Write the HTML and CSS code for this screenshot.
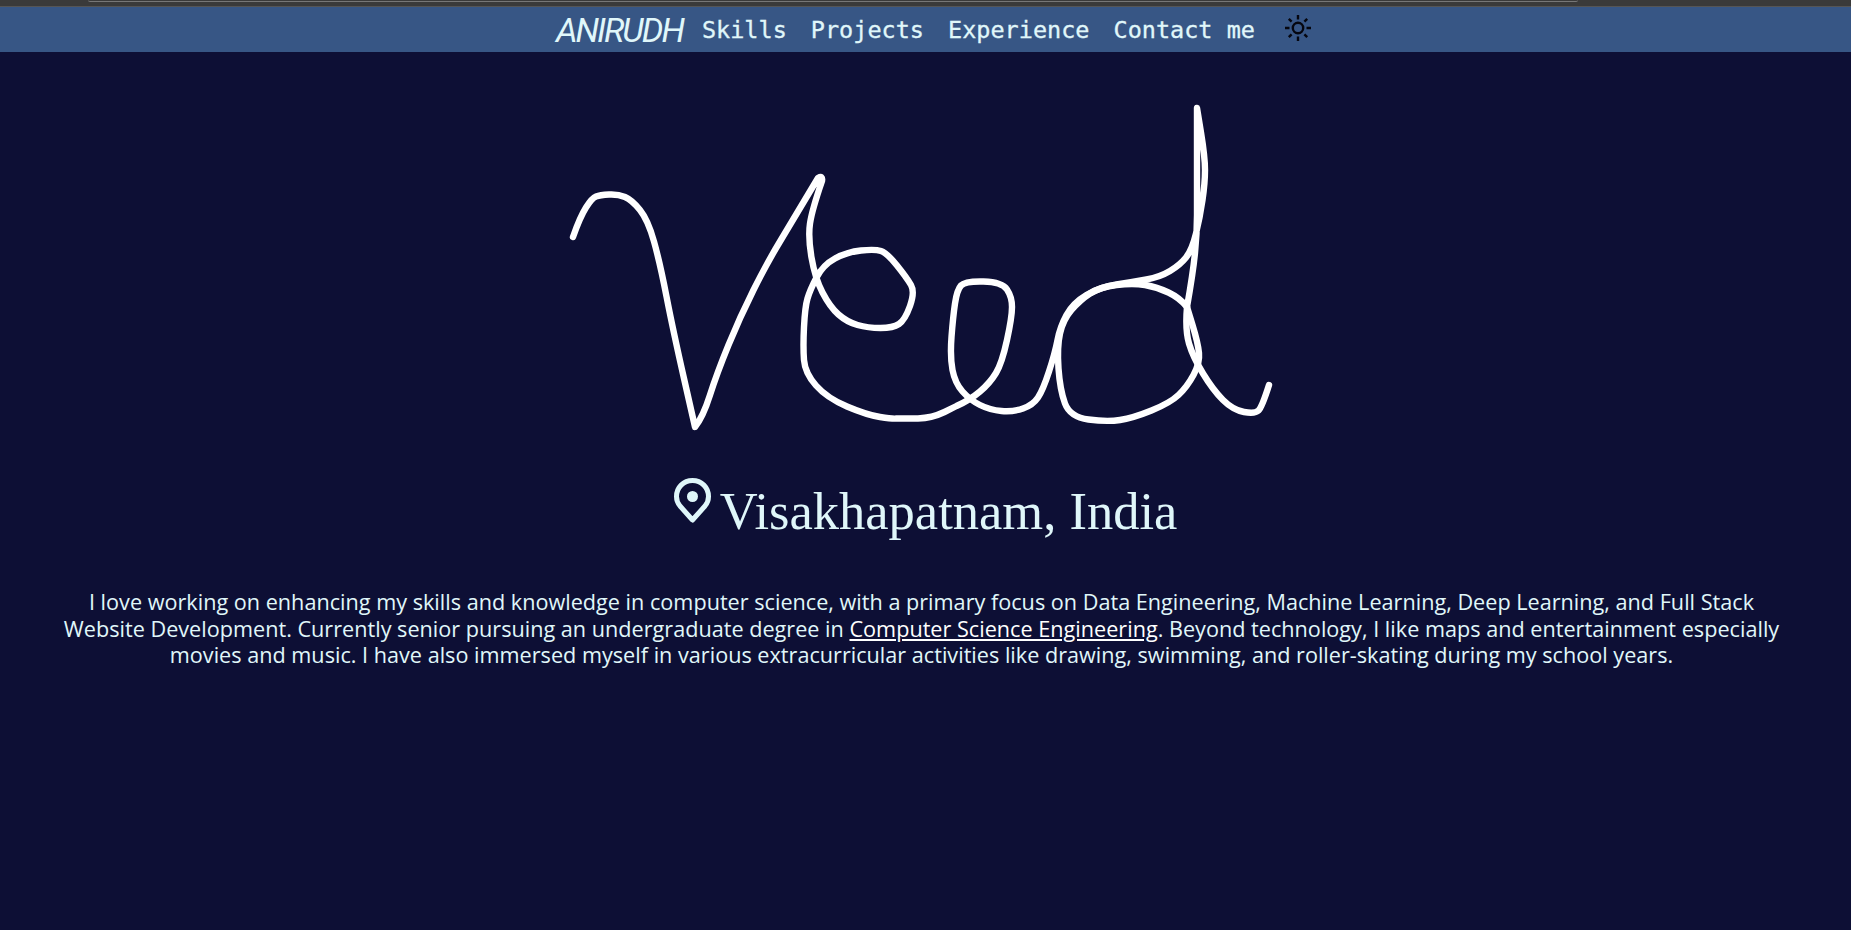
FILE: index.html
```html
<!DOCTYPE html>
<html lang="en">
<head>
    <meta charset="UTF-8">
    <meta name="viewport" content="width=device-width, initial-scale=1.0">
    <title>Anirudh</title>
    <link rel="stylesheet" href="styles.css">
</head>
<body>
    <div class="browser-strip"><div class="address-edge"></div></div>
    <nav class="navbar">
        <a class="brand" href="#">ANIRUDH</a>
        <a class="nav-link" href="#skills">Skills</a>
        <a class="nav-link" href="#projects">Projects</a>
        <a class="nav-link" href="#experience">Experience</a>
        <a class="nav-link" href="#contact">Contact me</a>
        <svg class="sun" viewBox="0 0 28 28" fill="none" stroke="#05060f" stroke-width="2.4">
            <circle cx="14" cy="14" r="5.2"/>
            <path d="M14 1v4.5M14 22.5v4.5M1 14h4.5M22.5 14h4.5M4.8 4.8l2.8 2.8M20.4 20.4l2.8 2.8M4.8 23.2l2.8-2.8M20.4 7.6l2.8-2.8"/>
        </svg>
    </nav>
    <main class="hero">
        <svg class="signature" viewBox="0 0 731 340" fill="none" stroke="#fff" stroke-width="6.4" stroke-linecap="round" stroke-linejoin="round">
            <path d="M13 142 Q20 122 26 112.5 Q32 103 36 101.5 Q40 100 49 99.5 Q58 99 65 102 Q72 105 80 115 Q88 125 94 146.5 Q100 168 106.5 201.5 Q113 235 124 283.5 L135 332 Q143 322 150 300 Q157 278 168.5 250 Q180 222 193.5 195 Q207 168 220 146.5 L258 83 Q263 80 262 86 Q252 115 250 128.5 Q248 142 251.5 162.5 Q255 183 262.5 197.5 Q270 212 278.5 219.5 Q287 227 297.5 230 Q308 233 320.5 233 Q333 233 339 229 Q345 225 350 211 Q355 197 351 190 Q347 183 337 170.5 Q327 158 321 156 Q315 154 301 155.5 Q287 157 275 163.5 Q263 170 256.5 182.5 Q250 195 247.5 203.5 Q245 212 244 232 Q243 252 244 265 Q245 278 256 290.5 Q267 303 287 311.5 Q307 320 320 322 Q333 324 336.5 323.5 L358 323.5 Q372 323 384.5 317 L396.5 311 Q410 305 420 296.5 Q430 288 436 278 Q442 268 447 245 Q452 222 452 212 Q452 202 447 194.5 Q442 187 423.5 186.5 Q405 186 401 190.5 Q397 195 395 208.5 Q393 222 391.5 242 Q390 262 392.5 275 Q395 288 402.5 296.5 Q410 305 420 310 Q430 315 441.5 316 Q453 317 463 313.5 Q473 310 478 302.5 Q483 295 489 276.5 Q495 258 497.5 245 Q500 232 506.5 220 Q513 208 526.5 200 Q540 192 556.5 189.5 Q573 187 586.5 184.5 Q600 182 610 176 Q620 170 626 162.5 Q632 155 636 138.5 Q640 122 642.5 105 Q645 88 645 75 Q645 62 641 37.5 L637 13 L637 120 Q637 138 635 158 Q633 178 627 212"/>
            <path d="M627 212 Q620 203 608.5 197.5 Q597 192 585 190 Q573 188 556.5 190 Q540 192 530 198.5 Q520 205 511.5 215 Q503 225 500 238.5 Q497 252 498.5 273.5 Q500 295 505 308.5 Q510 322 528.5 324.5 Q547 327 560 325 Q573 323 591.5 315.5 Q610 308 618.5 300 Q627 292 633.5 280 Q640 268 639 258 Q638 248 632.5 230 L627 212"/>
            <path d="M627 212 Q625 235 629 248.5 Q633 262 643 278.5 Q653 295 663 305 Q673 315 684 317 Q695 319 698.5 315.5 Q702 312 709 290"/>
        </svg>
        <h2 class="location">
            <svg class="pin" viewBox="0 0 37 45" fill="none" stroke="#e0f7fa" stroke-width="5" stroke-linejoin="round">
                <path d="M18.5 42 L6 28 C3.5 25 2.5 22 2.5 18.5 C2.5 9.5 9.5 2.5 18.5 2.5 C27.5 2.5 34.5 9.5 34.5 18.5 C34.5 22 33.5 25 31 28 Z"/>
                <circle cx="18.5" cy="18.5" r="5.5" fill="#e0f7fa" stroke="none"/>
            </svg>
            Visakhapatnam, India
        </h2>
        <p class="about">
            I love working on enhancing my skills and knowledge in computer science, with a primary focus on Data Engineering, Machine Learning, Deep Learning, and Full Stack<br>
            Website Development. Currently senior pursuing an undergraduate degree in <a href="#">Computer Science Engineering</a>. Beyond technology, I like maps and entertainment especially<br>
            movies and music. I have also immersed myself in various extracurricular activities like drawing, swimming, and roller-skating during my school years.
        </p>
    </main>
</body>
</html>
```
FILE: styles.css
```css
html, body {
    height: 100%;
}
body {
    margin: 0;
    background-color: #0d0f35;
    color: #e0f7fa;
    overflow: hidden;
}
.browser-strip {
    height: 6px;
    background-color: #3a3a3a;
    border-bottom: 1px solid #555;
    padding: 0 273px 0 88px;
}
.address-edge {
    height: 1px;
    border-bottom: 1px solid #777;
    border-radius: 0 0 8px 8px;
}
.navbar {
    height: 45px;
    padding-left: 17px;
    background-color: #375685;
    display: flex;
    justify-content: center;
    align-items: center;
    gap: 24px;
}
.brand {
    font-family: "Roboto", sans-serif;
    font-style: italic;
    font-weight: 400;
    font-size: 34px;
    letter-spacing: -2px;
    margin-right: -5px;
    color: #e0f7fa;
    text-decoration: none;
}
.nav-link {
    font-family: "DejaVu Sans Mono", monospace;
    font-size: 23.5px;
    -webkit-text-stroke: 0.3px #e0f7fa;
    color: #e0f7fa;
    text-decoration: none;
}
.sun {
    width: 28px;
    height: 28px;
    margin-left: 5px;
    margin-bottom: 4px;
}
.hero {
    display: flex;
    flex-direction: column;
    align-items: center;
}
.signature {
    width: 731px;
    height: 340px;
    margin-top: 43px;
}
.location {
    margin: 44px 0 0;
    display: flex;
    align-items: flex-start;
    gap: 9px;
    font-family: "Liberation Serif", serif;
    font-weight: 400;
    font-size: 52.5px;
    line-height: 64px;
}
.pin {
    width: 37px;
    height: 45px;
    margin-top: -1px;
}
.about {
    margin: 46px 0 0;
    padding-right: 8px;
    font-family: "Open Sans", sans-serif;
    font-size: 21.65px;
    line-height: 26.5px;
    text-align: center;
    white-space: nowrap;
}
.about a {
    color: #fff;
}
```
